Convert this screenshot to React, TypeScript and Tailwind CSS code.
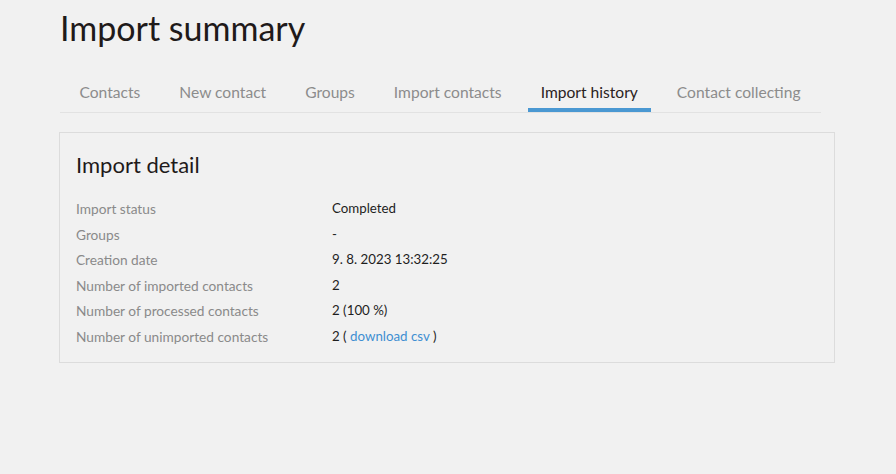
import React from 'react';

const tabs = ['Contacts', 'New contact', 'Groups', 'Import contacts', 'Import history', 'Contact collecting'];

const rows: { label: string; value: React.ReactNode }[] = [
  { label: 'Import status', value: 'Completed' },
  { label: 'Groups', value: '-' },
  { label: 'Creation date', value: '9. 8. 2023 13:32:25' },
  { label: 'Number of imported contacts', value: '2' },
  { label: 'Number of processed contacts', value: '2 (100 %)' },
  {
    label: 'Number of unimported contacts',
    value: (
      <>
        2 ( <a href="#" className="text-[#3f8fd2]">download csv</a> )
      </>
    ),
  },
];

export default function App() {
  return (
    <div className="min-h-[474px] bg-[#f1f1f1] font-['Lato',sans-serif] text-[#222]">
      <div className="pl-[59px] pr-[61px] pt-[6px]">
        <h1 className="text-[34px] leading-[44px] text-[#1f1a1a] ml-[1px]">Import summary</h1>

        <nav className="mt-[29px] ml-[1px] mr-[14px] flex border-b border-[#e2e2e2]">
          {tabs.map((t) => {
            const active = t === 'Import history';
            return (
              <div
                key={t}
                className={`shrink-0 whitespace-nowrap mx-[6.5px] px-[13px] pb-[3px] text-[15.6px] leading-[26px] border-b-[4px] ${
                  active ? 'border-[#4a98d2] text-[#2a2222]' : 'border-transparent text-[#8c8c8c]'
                }`}
              >
                {t}
              </div>
            );
          })}
        </nav>

        <section className="mt-[19px] border border-[#dcdcdc] px-[16px] pt-[17px] pb-[12px]">
          <h2 className="text-[22px] leading-[30px] text-[#1f1a1a]">Import detail</h2>
          <div className="mt-[16px]">
            {rows.map((r) => (
              <div key={r.label} className="flex leading-[25.6px]">
                <div className="w-[256px] text-[13.7px] text-[#8a8a8a]">{r.label}</div>
                <div className="text-[13.3px] text-[#1e1e1e]">{r.value}</div>
              </div>
            ))}
          </div>
        </section>
      </div>
    </div>
  );
}
